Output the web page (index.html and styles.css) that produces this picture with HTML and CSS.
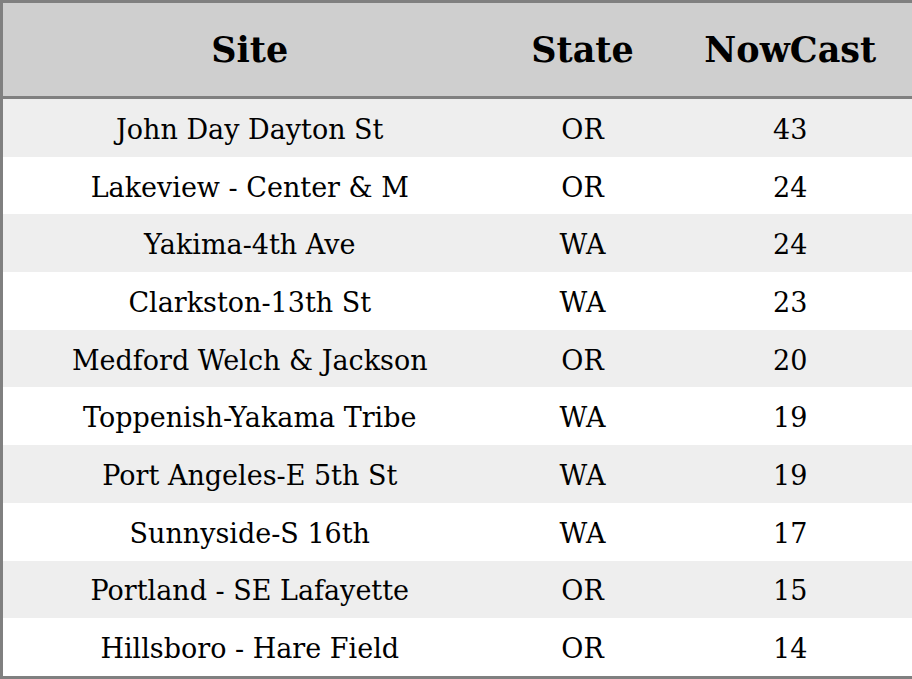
FILE: index.html
```html
<!DOCTYPE html>
<html>
<head>
<meta charset="utf-8">
<link rel="stylesheet" href="styles.css">
</head>
<body>
<table class="aq-table">
  <colgroup>
    <col class="col-site">
    <col class="col-state">
    <col class="col-now">
  </colgroup>
  <thead>
    <tr class="head-row"><th>Site</th><th>State</th><th>NowCast</th></tr>
  </thead>
  <tbody>
    <tr><td>John Day Dayton St</td><td>OR</td><td>43</td></tr>
    <tr><td>Lakeview - Center &amp; M</td><td>OR</td><td>24</td></tr>
    <tr><td>Yakima-4th Ave</td><td>WA</td><td>24</td></tr>
    <tr><td>Clarkston-13th St</td><td>WA</td><td>23</td></tr>
    <tr><td>Medford Welch &amp; Jackson</td><td>OR</td><td>20</td></tr>
    <tr><td>Toppenish-Yakama Tribe</td><td>WA</td><td>19</td></tr>
    <tr><td>Port Angeles-E 5th St</td><td>WA</td><td>19</td></tr>
    <tr><td>Sunnyside-S 16th</td><td>WA</td><td>17</td></tr>
    <tr><td>Portland - SE Lafayette</td><td>OR</td><td>15</td></tr>
    <tr><td>Hillsboro - Hare Field</td><td>OR</td><td>14</td></tr>
  </tbody>
</table>
</body>
</html>
```
FILE: styles.css
```css
html, body {
  margin: 0;
  padding: 0;
  background: #ffffff;
}
.aq-table {
  width: 912px;
  border-collapse: collapse;
  border: 3px solid #808080;
  font-family: "DejaVu Serif", serif;
  color: #000;
  table-layout: fixed;
}
.col-site { width: 495px; }
.col-state { width: 172px; }
.col-now { width: 245px; }
.aq-table th {
  background: #cfcfcf;
  font-size: 35px;
  font-weight: bold;
  height: 93px;
  padding: 0;
  border-bottom: 3px solid #808080;
  text-align: center;
}
.aq-table td {
  font-size: 27px;
  height: 54.7px;
  padding: 3px 0 0 0;
  text-align: center;
}
.aq-table tbody tr:nth-child(odd) { background: #eeeeee; }
.aq-table tbody tr:nth-child(even) { background: #ffffff; }
```
